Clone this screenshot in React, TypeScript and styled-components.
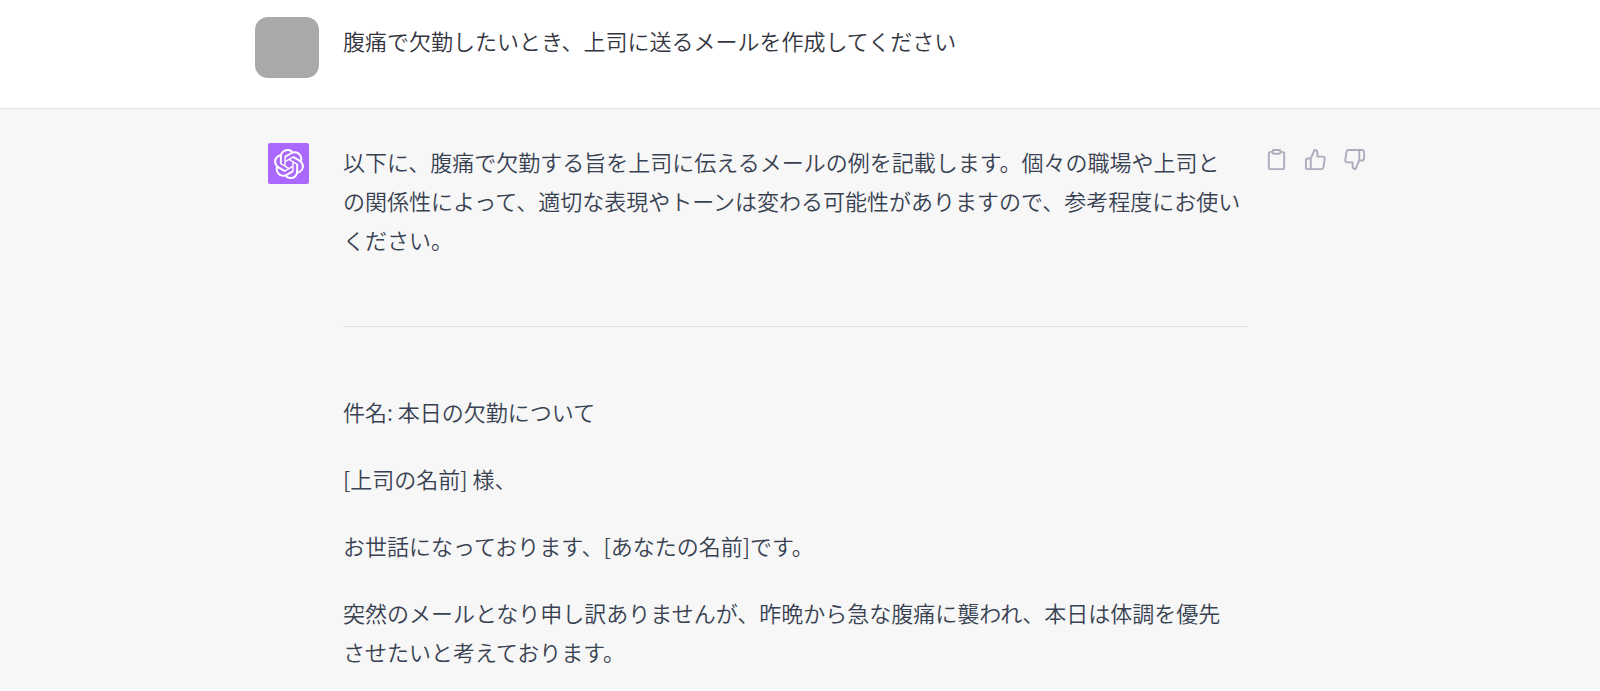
import React from 'react';
import styled, { createGlobalStyle } from 'styled-components';
import { FiClipboard, FiThumbsDown, FiThumbsUp } from 'react-icons/fi';
import { SiOpenai } from 'react-icons/si';

const GlobalStyle = createGlobalStyle`
  * {
    box-sizing: border-box;
  }
  body {
    margin: 0;
    background: #ffffff;
    font-family: 'Noto Sans CJK JP', sans-serif;
    font-weight: 350;
    font-size: 22px;
    line-height: 39px;
  }
`;

const Turn = styled.section<{ $reply?: boolean }>`
  display: grid;
  grid-template-columns: 64px minmax(0, 905px) 102px;
  justify-content: center;
  align-items: start;
  padding: ${(p) => (p.$reply ? '33px 0 18px 29px' : '17px 0 30px 29px')};
  background: ${(p) => (p.$reply ? '#f7f7f7' : '#ffffff')};
  color: ${(p) => (p.$reply ? '#374151' : '#343541')};
  border-bottom: 1px solid ${(p) => (p.$reply ? '#fbfbfb' : '#e3e3e5')};
  column-gap: 24px;
`;

const UserAvatar = styled.div`
  height: 61px;
  border-radius: 13px;
  background: #a9a9a9;
`;

const BotAvatar = styled.div`
  display: flex;
  align-items: center;
  justify-content: center;
  justify-self: end;
  width: 41px;
  height: 41px;
  margin: 1px 10px 0 0;
  border-radius: 2px;
  background: #ab68ff;
  color: #ffffff;
`;

const Message = styled.div`
  padding-top: 4px;
`;

const Reply = styled.div`
  display: flex;
  flex-direction: column;
  gap: 28px;
`;

const Paragraph = styled.p`
  margin: 0;
`;

const Divider = styled.hr`
  width: 100%;
  height: 1px;
  margin: 39px 0 37px;
  border: 0;
  background: #dfdfe8;
`;

const Actions = styled.div`
  display: flex;
  gap: 16px;
  padding-top: 6px;
  margin-left: -7px;
`;

const ActionButton = styled.button`
  display: flex;
  padding: 0;
  border: 0;
  background: none;
  color: #acacbe;
  cursor: pointer;
`;

export default function App() {
  return (
    <main>
      <GlobalStyle />
      <Turn>
        <UserAvatar />
        <Message>
          <Paragraph>腹痛で欠勤したいとき、上司に送るメールを作成してください</Paragraph>
        </Message>
      </Turn>
      <Turn $reply>
        <BotAvatar>
          <SiOpenai size={30} />
        </BotAvatar>
        <Reply>
          <Paragraph>
            以下に、腹痛で欠勤する旨を上司に伝えるメールの例を記載します。個々の職場や上司と
            <br />
            の関係性によって、適切な表現やトーンは変わる可能性がありますので、参考程度にお使い
            <br />
            ください。
          </Paragraph>
          <Divider />
          <Paragraph>件名: 本日の欠勤について</Paragraph>
          <Paragraph>[上司の名前] 様、</Paragraph>
          <Paragraph>お世話になっております、[あなたの名前]です。</Paragraph>
          <Paragraph>
            突然のメールとなり申し訳ありませんが、昨晩から急な腹痛に襲われ、本日は体調を優先
            <br />
            させたいと考えております。
          </Paragraph>
        </Reply>
        <Actions>
          <ActionButton aria-label="コピー">
            <FiClipboard size={23} />
          </ActionButton>
          <ActionButton aria-label="良い回答">
            <FiThumbsUp size={23} />
          </ActionButton>
          <ActionButton aria-label="良くない回答">
            <FiThumbsDown size={23} />
          </ActionButton>
        </Actions>
      </Turn>
    </main>
  );
}
